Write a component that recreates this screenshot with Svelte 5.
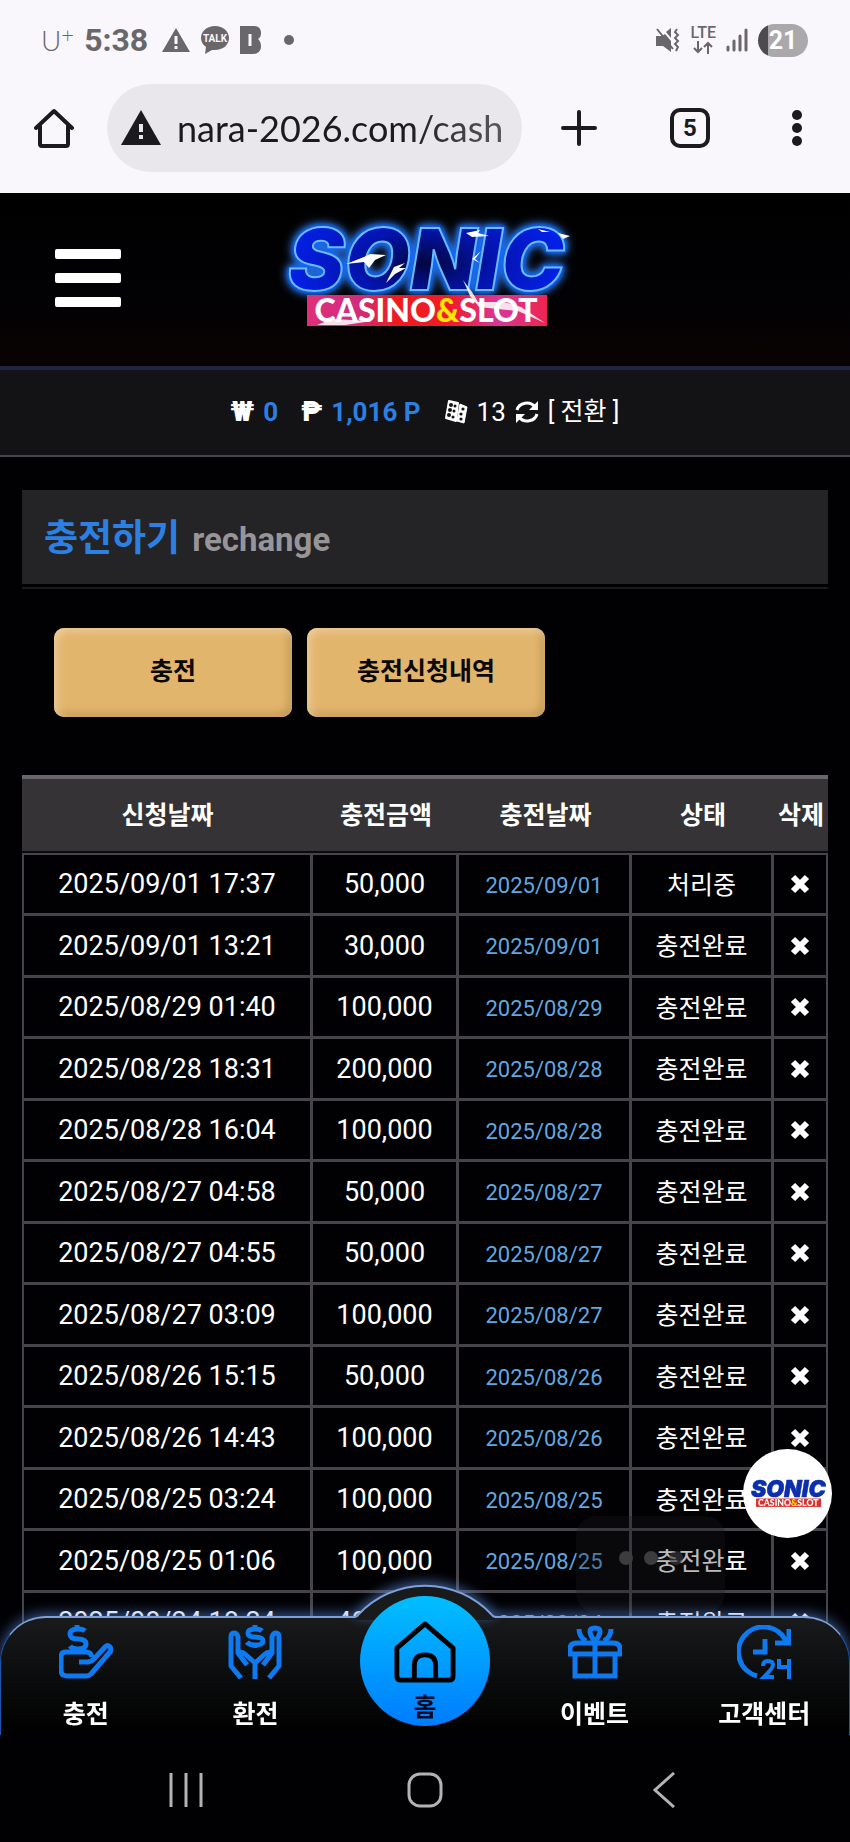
<script lang="ts">
  type Recharge = {
    requested: string;
    amount: string;
    charged: string;
    status: string;
  };

  let url = $state('nara-2026.com/cash');

  let rows = $state<Recharge[]>([
    { requested: '2025/09/01 17:37', amount: '50,000', charged: '2025/09/01', status: '처리중' },
    { requested: '2025/09/01 13:21', amount: '30,000', charged: '2025/09/01', status: '충전완료' },
    { requested: '2025/08/29 01:40', amount: '100,000', charged: '2025/08/29', status: '충전완료' },
    { requested: '2025/08/28 18:31', amount: '200,000', charged: '2025/08/28', status: '충전완료' },
    { requested: '2025/08/28 16:04', amount: '100,000', charged: '2025/08/28', status: '충전완료' },
    { requested: '2025/08/27 04:58', amount: '50,000', charged: '2025/08/27', status: '충전완료' },
    { requested: '2025/08/27 04:55', amount: '50,000', charged: '2025/08/27', status: '충전완료' },
    { requested: '2025/08/27 03:09', amount: '100,000', charged: '2025/08/27', status: '충전완료' },
    { requested: '2025/08/26 15:15', amount: '50,000', charged: '2025/08/26', status: '충전완료' },
    { requested: '2025/08/26 14:43', amount: '100,000', charged: '2025/08/26', status: '충전완료' },
    { requested: '2025/08/25 03:24', amount: '100,000', charged: '2025/08/25', status: '충전완료' },
    { requested: '2025/08/25 01:06', amount: '100,000', charged: '2025/08/25', status: '충전완료' },
    { requested: '2025/08/24 18:24', amount: '400,000', charged: '2025/08/24', status: '충전완료' }
  ]);

  function removeRow(row: Recharge) {
    rows = rows.filter((r) => r !== row);
  }
</script>

{#snippet logo(id: string)}
  <svg class="logo" viewBox="0 0 310 110" role="img" aria-label="SONIC CASINO&SLOT">
    <defs>
      <linearGradient id="{id}-band" x1="0" x2="1">
        <stop offset="0" stop-color="#e02f78" />
        <stop offset="0.2" stop-color="#d02c80" />
        <stop offset="0.38" stop-color="#ee1c1c" />
        <stop offset="0.6" stop-color="#ee1c2c" />
        <stop offset="0.8" stop-color="#d8369a" />
        <stop offset="1" stop-color="#ee2450" />
      </linearGradient>
      <radialGradient id="{id}-word" gradientUnits="userSpaceOnUse" cx="155" cy="40" r="140" gradientTransform="translate(0 20) scale(1 0.5)">
        <stop offset="0" stop-color="#020640" />
        <stop offset="0.5" stop-color="#0414b0" />
        <stop offset="1" stop-color="#0420e8" />
      </radialGradient>
    </defs>
    <text class="word" x="18" y="67" fill="url(#{id}-word)">SONIC</text>
    <rect class="band" x="37" y="72" width="240" height="31" fill="url(#{id}-band)" />
    <text class="sub" x="156" y="99" text-anchor="middle">CASINO<tspan class="amp">&amp;</tspan>SLOT</text>
    <g class="spark" fill="#fff">
      <path d="M76 41 94 34 100 31 116 32 105 37 99 45 94 39Z" />
      <path d="M116 60 124 44 135 40 129 45 136 45 125 51Z" />
      <path d="M196 10 210 7 208 10 219 13 202 14Z" />
      <path d="M211 28 202 36 210 40 205 36Z" />
      <path d="M193 57 202 69 208 79 234 79 251 84 275 100 248 88 209 84 200 73Z" opacity="0.85" />
      <path d="M47 102 62 96 102 98 75 102Z" opacity="0.85" />
      <path d="M268 6 280 9 272 9Z M288 10 300 13 293 16Z" />
    </g>
  </svg>
{/snippet}

<div class="chrome">
  <div class="status">
    <div class="status-left">
      <span class="carrier">U<sup>+</sup></span>
      <span class="clock">5:38</span>
      <svg class="warn" width="28" height="26" viewBox="0 0 28 26" aria-hidden="true">
        <path d="M14 1 28 25H0Z" fill="#6a676b" />
        <path d="M14 9v8M14 19v3" stroke="#faf7fc" stroke-width="3" />
      </svg>
      <svg class="talk" width="30" height="28" viewBox="0 0 30 28" aria-hidden="true">
        <path d="M15 0C7 0 1 5 1 12c0 4 2 7 5 9l-1 7 7-4h3c8 0 14-5 14-12S23 0 15 0Z" fill="#6a676b" />
        <text x="15" y="16" text-anchor="middle">TALK</text>
      </svg>
      <svg width="22" height="28" viewBox="0 0 22 28" aria-hidden="true">
        <path d="M0 0h14c5 0 7 3 7 7 0 3-1 5-3 6 2 2 3 4 3 7 0 5-3 8-8 8H0Z" fill="#6a676b" />
        <path d="M10 8v12" stroke="#faf7fc" stroke-width="3" />
      </svg>
      <i class="dot"></i>
    </div>
    <div class="status-right">
      <svg width="26" height="26" viewBox="0 0 26 26" aria-hidden="true">
        <path d="M1 9h6l3-2 6 7v11l-8-6H1Z M11 5l5-4v10Z" fill="#6a676b" />
        <path d="M2 2l16 20" stroke="#6a676b" stroke-width="2" />
        <path d="M22 2l-2 3 3 3-3 3 3 3-3 3 3 3-2 4" fill="none" stroke="#6a676b" stroke-width="2" />
      </svg>
      <span class="lte">
        LTE
        <svg width="20" height="13" viewBox="0 0 20 13" fill="none" stroke="#6a676b" stroke-width="2" aria-hidden="true">
          <path d="M5 0v11M1 7l4 4 4-4M15 13V2M11 6l4-4 4 4" />
        </svg>
      </span>
      <svg width="22" height="24" viewBox="0 0 22 24" stroke="#6a676b" stroke-width="3" stroke-linecap="round" aria-hidden="true">
        <path d="M2 19v3M8 13v9M14 8v14M20 2v20" />
      </svg>
      <span class="battery">21</span>
    </div>
  </div>

  <div class="toolbar">
    <button class="tool" aria-label="Home">
      <svg width="40" height="40" viewBox="0 0 40 40" fill="none" stroke="#1b1a1e" stroke-width="4" stroke-linejoin="round" stroke-linecap="round">
        <path d="M2 20 20 3l18 17M6 18v18q0 2 2 2h24q2 0 2-2V18" />
      </svg>
    </button>
    <label class="address">
      <svg width="40" height="36" viewBox="0 0 40 36" aria-hidden="true">
        <path d="M20 0 40 35H0Z" fill="#1b1a1e" />
        <path d="M20 14v8M20 25v4" stroke="#eae7ec" stroke-width="4" />
      </svg>
      <input type="text" bind:value={url} aria-label="Address" />
    </label>
    <button class="tool" aria-label="New tab">
      <svg width="36" height="36" viewBox="0 0 36 36" stroke="#1b1a1e" stroke-width="4" stroke-linecap="round">
        <path d="M18 2v32M2 18h32" />
      </svg>
    </button>
    <button class="tool" aria-label="Tabs"><span class="tabs">5</span></button>
    <button class="tool" aria-label="Menu">
      <svg width="10" height="36" viewBox="0 0 10 36" fill="#1b1a1e">
        <circle cx="5" cy="5" r="5" /><circle cx="5" cy="18" r="5" /><circle cx="5" cy="31" r="5" />
      </svg>
    </button>
  </div>
</div>

<header>
  <button class="burger" aria-label="메뉴"><i></i><i></i><i></i></button>
  <a class="brand" href="#home">{@render logo('top')}</a>
</header>

<div class="wallet">
  <span class="sign">₩</span>
  <strong>0</strong>
  <span class="sign peso">₱</span>
  <strong>1,016 P</strong>
  <svg class="dice" width="24" height="24" viewBox="0 0 24 24" aria-hidden="true">
    <path d="M5 1 14 3 12 21 2 18Z" fill="#fff" stroke="#fff" stroke-width="2" stroke-linejoin="round" />
    <path d="M16 4 23 7 20 23 13 21Z" fill="#fff" stroke="#fff" stroke-linejoin="round" />
    <g fill="#131215">
      <circle cx="7" cy="5" r="2" /><circle cx="11" cy="6" r="1.5" /><circle cx="6" cy="10" r="2" />
      <circle cx="10" cy="11" r="1.5" /><circle cx="5" cy="15" r="2" /><circle cx="9" cy="17" r="1.5" />
      <circle cx="19" cy="9" r="1.6" /><circle cx="17" cy="14" r="1.6" /><circle cx="17" cy="19" r="1.6" />
    </g>
  </svg>
  <span class="count">13</span>
  <svg width="24" height="24" viewBox="0 0 24 24" fill="none" stroke="#fff" stroke-width="3" aria-hidden="true">
    <path d="M2 10a10 9 0 0 1 18-3M22 14a10 9 0 0 1-18 3" />
    <path d="M23 1v9h-9ZM1 23v-9h9Z" fill="#fff" stroke="none" />
  </svg>
  <a class="convert" href="#convert">[ 전환 ]</a>
</div>

<main>
  <h1>충전하기 <small>rechange</small></h1>

  <div class="modes">
    <button>충전</button>
    <button>충전신청내역</button>
  </div>

  <table>
    <colgroup>
      <col />
      <col class="c-amount" />
      <col class="c-date" />
      <col class="c-status" />
      <col class="c-delete" />
    </colgroup>
    <thead>
      <tr>
        <th>신청날짜</th>
        <th>충전금액</th>
        <th>충전날짜</th>
        <th>상태</th>
        <th>삭제</th>
      </tr>
    </thead>
    <tbody>
      {#each rows as row}
        <tr>
          <td>{row.requested}</td>
          <td>{row.amount}</td>
          <td class="charged">{row.charged}</td>
          <td class="state">{row.status}</td>
          <td>
            <button class="delete" aria-label="삭제" onclick={() => removeRow(row)}>
              <svg width="20" height="20" viewBox="0 0 20 20" stroke="#fff" stroke-width="6">
                <path d="M3 3l14 14M17 3 3 17" />
              </svg>
            </button>
          </td>
        </tr>
      {/each}
    </tbody>
  </table>
</main>

<div class="toast" aria-hidden="true"><i></i><i></i><i></i></div>
<a class="chat" href="#chat">{@render logo('chat')}</a>

<footer>
  <nav class="dock">
    <svg class="hump" width="140" height="36" viewBox="0 0 140 36" aria-hidden="true">
      <path d="M0 36V33Q2 33 4 30A91 91 0 0 1 136 30Q138 33 140 33V36Z" fill="#181a1c" />
      <path d="M0 33Q2 33 4 30A91 91 0 0 1 136 30Q138 33 140 33" fill="none" stroke="#7f9fd8" stroke-width="2" />
    </svg>
    <a href="#deposit">
      <svg width="54" height="54" viewBox="0 0 54 54" fill="none" stroke="#0f7af0" stroke-width="5" stroke-linejoin="round">
        <path d="M26 6q-2-2-7-2-8 0-8 5t8 5q8 0 8 5t-8 5q-6 0-8-3M18 0v4M18 23v5" />
        <path d="M20 37h8q4 0 7-3l11-12q3-3 5 0t0 5L32 49q-2 2-5 2H8q-6 0-6-6V32q0-5 5-5h20q5 0 6 5" />
      </svg>
      <span>충전</span>
    </a>
    <a href="#withdraw">
      <svg width="54" height="54" viewBox="0 0 54 54" fill="none" stroke="#0f7af0" stroke-width="5" stroke-linejoin="round">
        <path d="M34 6q-2-2-7-2-7 0-7 4t7 4q8 0 8 4t-8 4q-6 0-8-3M27 0v4M27 20v3" />
        <path d="M13 53 3 41V12q0-4 3-4t4 4v16l9 12M10 28q4-2 7 1l10 9v16M41 53l10-12V12q0-4-3-4t-4 4v16l-9 12M44 28q-4-2-7 1l-10 9" />
      </svg>
      <span>환전</span>
    </a>
    <a class="home" href="#home">
      <svg width="62" height="62" viewBox="0 0 64 64" fill="none" stroke="#000" stroke-width="5" stroke-linejoin="round">
        <path d="M3 28 32 3l29 25v29q0 4-4 4H7q-4 0-4-4ZM21 60V46q0-11 11-11t11 11v14" />
      </svg>
      <span>홈</span>
    </a>
    <a href="#event">
      <svg width="54" height="54" viewBox="0 0 54 54" fill="none" stroke="#0f7af0" stroke-width="5">
        <path d="M2 29v-5q0-6 7-6h36q7 0 7 6v5ZM7 30v21h40V30M27 17v34" />
        <path d="M27 17Q17 3 27 3t0 14M11 4q0 8 7 12M43 4q0 8-7 12" />
      </svg>
      <span>이벤트</span>
    </a>
    <a href="#support">
      <svg width="54" height="54" viewBox="0 0 54 54" fill="none" stroke="#0f7af0" stroke-width="5">
        <path d="M20 51A25 25 0 1 1 49 16M52 4v14H38M28 14v13H16" />
        <path d="M26 41q0-5 5-5t5 4q0 3-9 12h10M42 34v8h9M52 34v20" stroke-width="4" />
      </svg>
      <span>고객센터</span>
    </a>
  </nav>
  <div class="sysnav">
    <button aria-label="Recents">
      <svg width="34" height="36" viewBox="0 0 34 36" stroke="#b5b2b6" stroke-width="3"><path d="M2 1v34M17 1v34M32 1v34" /></svg>
    </button>
    <button aria-label="Home">
      <svg width="36" height="36" viewBox="0 0 36 36" fill="none" stroke="#b5b2b6" stroke-width="3"><rect x="2" y="2" width="32" height="32" rx="11" /></svg>
    </button>
    <button aria-label="Back">
      <svg width="24" height="36" viewBox="0 0 24 36" fill="none" stroke="#b5b2b6" stroke-width="3"><path d="M22 1 3 18l19 17" /></svg>
    </button>
  </div>
</footer>

<style>
  :global(body) {
    background: #010103;
    color: #fff;
    font-family: Roboto, 'Noto Sans CJK KR', sans-serif;
  }

  button {
    border: none;
    padding: 0;
    background: none;
    color: inherit;
    font-family: inherit;
    cursor: pointer;
  }

  a {
    color: inherit;
    text-decoration: none;
  }

  svg {
    display: block;
    flex: none;
  }

  .chrome {
    background: #faf7fc;
    color: #1b1a1e;
    padding-bottom: 21px;
  }

  .status {
    display: flex;
    align-items: center;
    justify-content: space-between;
    height: 80px;
    padding: 0 42px 0 41px;
    color: #6a676b;
  }

  .status-left,
  .status-right {
    display: flex;
    align-items: center;
    gap: 10px;
  }

  .carrier {
    font-family: Lato, sans-serif;
    font-size: 28px;
    font-weight: 300;
    line-height: 32px;
  }

  .carrier sup {
    font-size: 22px;
    line-height: 0;
    vertical-align: 8px;
  }

  .clock {
    font-size: 32px;
    font-weight: 700;
  }

  .warn {
    margin-left: 4px;
  }

  .talk text {
    fill: #faf7fc;
    font-size: 10px;
    font-weight: 700;
  }

  .dot {
    width: 10px;
    height: 10px;
    margin-left: 12px;
    border-radius: 50%;
    background: #6a676b;
  }

  .lte {
    display: flex;
    flex-direction: column;
    align-items: center;
    gap: 1px;
    font-size: 16px;
    font-weight: 500;
    line-height: 14px;
  }

  .battery {
    width: 50px;
    border-radius: 17px;
    background: linear-gradient(90deg, #4d4b4e 10px, #aaa8ab 10px);
    color: #fff;
    font-size: 25px;
    font-weight: 700;
    line-height: 33px;
    text-align: center;
  }

  .toolbar {
    display: grid;
    grid-template-columns: 107px 1fr 114px 108px 106px;
    align-items: center;
    padding-top: 4px;
  }

  .tool {
    display: flex;
    align-items: center;
    justify-content: center;
    height: 88px;
  }

  .address {
    display: flex;
    align-items: center;
    gap: 16px;
    min-width: 0;
    height: 88px;
    box-sizing: border-box;
    padding: 0 21px 0 14px;
    border-radius: 44px;
    background: #eae7ec;
  }

  .address input {
    flex: 1;
    min-width: 0;
    padding: 0;
    border: none;
    outline: none;
    background: none;
    color: #1b1a1e;
    font-family: Lato, sans-serif;
    font-size: 36px;
    line-height: 48px;
    mask-image: linear-gradient(90deg, #000 70%, rgba(0, 0, 0, 0.7));
  }

  .tabs {
    width: 32px;
    border: 4px solid #1b1a1e;
    border-radius: 10px;
    font-size: 24px;
    font-weight: 700;
    line-height: 32px;
  }

  header {
    display: grid;
    grid-template-columns: 1fr auto 1fr;
    align-items: center;
    height: 169px;
    padding: 0 55px 4px;
    border-bottom: 4px solid #20263f;
    background: linear-gradient(#000, #020104 60%, #090202);
  }

  .burger {
    display: flex;
    flex-direction: column;
    gap: 14px;
    width: 66px;
  }

  .burger i {
    height: 10px;
    border-radius: 2px;
    background: #fff;
  }

  .logo {
    overflow: visible;
  }

  .brand .logo {
    width: 310px;
  }

  .word {
    font-family: Inter, sans-serif;
    font-size: 85px;
    font-style: italic;
    font-weight: 900;
    stroke: #69bcff;
    stroke-width: 2;
    filter: drop-shadow(0 0 2px #0a62ff) drop-shadow(0 0 2px #0a5af0) drop-shadow(0 0 5px #3f8dff);
  }

  .sub {
    fill: #fff;
    font-family: Lato, sans-serif;
    font-size: 32px;
    font-weight: 900;
  }

  .amp {
    fill: #ffe600;
  }

  .wallet {
    display: flex;
    align-items: center;
    justify-content: center;
    gap: 9px;
    height: 83px;
    padding-bottom: 2px;
    border-bottom: 2px solid #48464a;
    background: #131215;
    font-size: 26px;
    line-height: 32px;
  }

  .wallet strong {
    color: #2c80e2;
  }

  .sign {
    font-size: 28px;
    font-weight: 900;
  }

  .peso {
    margin-left: 14px;
  }

  .dice {
    margin-left: 14px;
  }

  .convert {
    font-size: 25px;
  }

  main {
    padding: 33px 22px 190px;
  }

  h1 {
    position: relative;
    display: flex;
    align-items: baseline;
    gap: 12px;
    margin: 0;
    padding: 4px 22px 0;
    background: #242326;
    color: #2c80e2;
    font-size: 37px;
    line-height: 89px;
  }

  h1::after {
    content: '';
    position: absolute;
    inset: auto 0 -5px;
    height: 2px;
    background: #1b1a1d;
  }

  h1 small {
    color: #979598;
    font-size: 33px;
    font-weight: 700;
  }

  .modes {
    display: flex;
    gap: 15px;
    margin: 44px 32px 58px;
  }

  .modes button {
    width: 238px;
    height: 89px;
    padding-bottom: 8px;
    border-radius: 10px;
    background: #e2b56c;
    box-shadow: inset 3px 3px 8px #efcfa0, inset -3px -3px 8px #b8914f;
    color: #0b0707;
    font-size: 25px;
    font-weight: 700;
  }

  table {
    width: 100%;
    border-spacing: 0;
    table-layout: fixed;
    font-size: 27px;
    text-align: center;
  }

  .c-amount {
    width: 146px;
  }

  .c-date {
    width: 173px;
  }

  .c-status {
    width: 142px;
  }

  .c-delete {
    width: 54px;
  }

  th,
  td {
    box-sizing: border-box;
    padding: 0;
    line-height: 36px;
  }

  th {
    height: 78px;
    padding-top: 2px;
    border-top: 4px solid #68666a;
    border-bottom: 2px solid #0c0b0e;
    background: #353336;
    font-size: 25px;
    font-weight: 700;
    white-space: nowrap;
  }

  td {
    height: 61px;
    border-right: 3px solid #464448;
    border-bottom: 3px solid #464448;
  }

  tr:nth-child(even) td {
    height: 62px;
  }

  tbody tr:first-child td {
    height: 63px;
    border-top: 2px solid #464448;
  }

  td:first-child {
    border-left: 2px solid #464448;
  }

  td:last-child {
    border-right-width: 2px;
  }

  .charged,
  .state {
    padding-top: 3px;
  }

  .charged {
    color: #62a8e0;
    font-size: 22px;
  }

  .state {
    font-size: 25px;
  }

  .delete {
    display: block;
    margin: 0 auto;
  }

  .toast {
    position: fixed;
    right: 125px;
    bottom: 229px;
    display: flex;
    align-items: center;
    justify-content: center;
    gap: 11px;
    width: 149px;
    height: 97px;
    border-radius: 20px;
    background: rgba(30, 29, 32, 0.3);
  }

  .toast i {
    width: 14px;
    height: 14px;
    margin-bottom: 14px;
    border-radius: 50%;
    background: #3c3b3e;
  }

  .toast i:last-child {
    opacity: 0.6;
  }

  .chat {
    position: fixed;
    right: 18px;
    bottom: 304px;
    display: flex;
    align-items: center;
    justify-content: center;
    width: 89px;
    height: 89px;
    border-radius: 50%;
    background: #fff;
  }

  .chat .logo {
    width: 84px;
  }

  .chat .word {
    fill: #0b2fae;
    stroke: #0b2fae;
    filter: none;
  }

  .chat .band {
    fill: #d8322c;
  }

  .chat .spark {
    display: none;
  }

  footer {
    position: fixed;
    right: 0;
    bottom: 0;
    left: 0;
  }

  .dock {
    position: relative;
    display: grid;
    grid-template-columns: repeat(5, 1fr);
    height: 117px;
    border: 1px solid #1c55ad;
    border-top: 2px solid #7f9fd8;
    border-bottom: none;
    border-radius: 46px 46px 0 0;
    background: linear-gradient(#181a1c, #0b0c0d 50%, #000);
    box-shadow: 0 -2px 14px rgba(98, 150, 240, 0.6);
    font-size: 25px;
    font-weight: 700;
    line-height: 32px;
  }

  .hump {
    position: absolute;
    top: -34px;
    left: calc(50% - 70px);
    filter: drop-shadow(0 -3px 6px rgba(98, 150, 240, 0.6));
  }

  .dock a {
    display: flex;
    flex-direction: column;
    align-items: center;
    gap: 20px;
    padding-top: 7px;
    white-space: nowrap;
  }

  .dock .home {
    position: absolute;
    top: -22px;
    left: calc(50% - 65px);
    box-sizing: border-box;
    width: 130px;
    height: 130px;
    gap: 9px;
    padding-top: 25px;
    border-radius: 50%;
    background: linear-gradient(#00bfff, #007cff);
    color: #020a24;
  }

  .home + a {
    grid-column: 4;
  }

  .sysnav {
    position: relative;
    display: grid;
    grid-template-columns: repeat(3, 1fr);
    box-sizing: border-box;
    height: 107px;
    padding: 3px 66px 0;
    background: #010103;
  }

  .sysnav button {
    display: flex;
    align-items: center;
    justify-content: center;
  }
</style>
